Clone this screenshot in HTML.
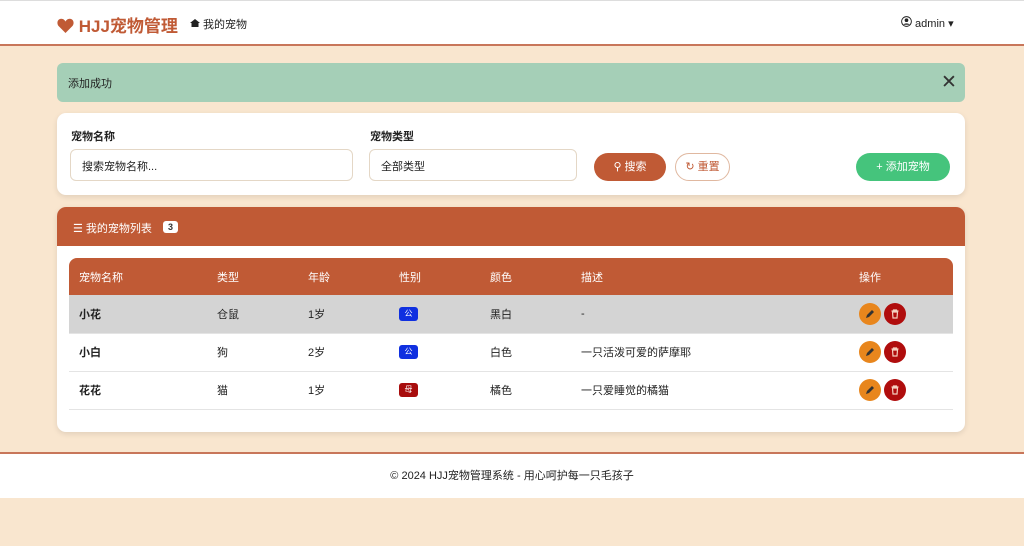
<!DOCTYPE html>
<html><head><meta charset="utf-8"><style>
*{box-sizing:border-box;margin:0;padding:0}
body{width:1024px;height:546px;background:#f9e6cf;font-family:"Liberation Sans","Noto Sans CJK SC",sans-serif;font-size:11px;color:#222;position:relative;overflow:hidden}
.nav{position:absolute;left:0;top:0;width:1024px;height:46px;background:#fff;border-top:1px solid #ddd;border-bottom:2px solid #c8765a}
.brand{position:absolute;left:57px;top:11px;font-size:17px;font-weight:bold;color:#c05a35}
.navlink{position:absolute;left:190px;top:15px;font-size:11px}
.user{position:absolute;left:901px;top:15px;font-size:11px}
.alert{position:absolute;left:57px;top:63px;width:908px;height:39px;background:#a5cfb7;border-radius:6px}
.alert span{position:absolute;left:11px;top:12px}
.alert .x{left:884px;top:8px;font-size:19px;color:#333}
.card{position:absolute;left:57px;width:908px;background:#fff;border-radius:9px;box-shadow:0 2px 6px rgba(0,0,0,.1)}
.lbl{position:absolute;top:15px;font-weight:bold;font-size:11px}
.inp{position:absolute;top:36px;height:32px;border:1px solid #e4d7c6;border-radius:6px;padding:8px 11px;font-size:11px}
.btn{position:absolute;top:40px;height:28px;border-radius:14px;font-size:11px;text-align:center;line-height:28px}
.lh{position:absolute;left:0;top:0;width:908px;height:39px;background:#c05a35;border-radius:9px 9px 0 0;color:#fff}
table{position:absolute;left:12px;top:51px;width:884px;border-collapse:collapse}
th{background:#c05a35;color:#fff;height:37px;text-align:left;font-weight:normal;padding-left:10px}
th:first-child{border-radius:8px 0 0 0}th:last-child{border-radius:0 8px 0 0}
td{height:38px;padding-left:10px;border-bottom:1px solid #e4e4e4}
.g{display:inline-block;width:19px;height:14px;border-radius:3px;color:#fff;font-size:8px;text-align:center;line-height:14px}
.c{display:inline-block;width:22px;height:22px;border-radius:50%;vertical-align:middle;margin-right:3px;position:relative}
.c svg{position:absolute;left:5px;top:5px}
.footer{position:absolute;left:0;top:452px;width:1024px;height:46px;background:#fff;border-top:2px solid #c8765a;text-align:center;line-height:44px;font-size:11px}
</style></head><body>
<div class="nav"><div class="brand"><svg width="17" height="15" viewBox="0 0 24 21" style="vertical-align:-1px"><path d="M12 21L2 11C-1 7 1 1 6 1c3 0 5 2 6 4 1-2 3-4 6-4 5 0 7 6 4 10z" fill="#c05a35"/></svg> HJJ宠物管理</div><div class="navlink"><svg width="10" height="10" viewBox="0 0 10 10"><path d="M5 1L0 5h1.5v4h7V5H10z" fill="#222"/></svg> 我的宠物</div><div class="user"><svg width="11" height="11" viewBox="0 0 12 12"><circle cx="6" cy="6" r="5.3" fill="none" stroke="#222"/><circle cx="6" cy="4.6" r="2" fill="#222"/><path d="M2.5 9.5c1-2 6-2 7 0" fill="#222"/></svg> admin ▾</div></div>
<div class="alert"><span>添加成功</span><span class="x">✕</span></div>
<div class="card" style="top:113px;height:82px">
<div class="lbl" style="left:14px">宠物名称</div><div class="inp" style="left:13px;width:283px">搜索宠物名称...</div>
<div class="lbl" style="left:313px">宠物类型</div><div class="inp" style="left:312px;width:208px">全部类型</div>
<div class="btn" style="left:537px;width:72px;background:#c05a35;color:#fff">⚲ 搜索</div>
<div class="btn" style="left:618px;width:55px;border:1px solid #e0b8a0;color:#c05a35;line-height:26px">↻ 重置</div>
<div class="btn" style="left:799px;width:94px;background:#45c47c;color:#fff">+ 添加宠物</div>
</div>
<div class="card" style="top:207px;height:225px">
<div class="lh"><span style="position:absolute;left:16px;top:13px">☰ 我的宠物列表</span><span style="position:absolute;left:106px;top:14px;background:#fff;color:#333;border-radius:3px;font-size:9px;font-weight:bold;padding:1px 5px">3</span></div>
<table>
<tr><th style="width:138px">宠物名称</th><th style="width:91px">类型</th><th style="width:91px">年龄</th><th style="width:91px">性别</th><th style="width:91px">颜色</th><th style="width:278px">描述</th><th>操作</th></tr>
<tr style="background:#d4d4d4"><td><b>小花</b></td><td>仓鼠</td><td>1岁</td><td><span class="g" style="background:#1030e0">公</span></td><td>黑白</td><td>-</td><td><span class="c" style="background:#e8861d"><svg width="12" height="12" viewBox="0 0 12 12"><path d="M2 10l1-3 5-5 2 2-5 5z" fill="#333"/></svg></span><span class="c" style="background:#b00d0d"><svg width="12" height="12" viewBox="0 0 12 12"><path d="M2.5 3h7M4.5 3V2h3v1M3.5 4h5l-.5 6h-4z" fill="none" stroke="#f4d0c0" stroke-width="1.2"/></svg></span></td></tr>
<tr><td><b>小白</b></td><td>狗</td><td>2岁</td><td><span class="g" style="background:#1030e0">公</span></td><td>白色</td><td>一只活泼可爱的萨摩耶</td><td><span class="c" style="background:#e8861d"><svg width="12" height="12" viewBox="0 0 12 12"><path d="M2 10l1-3 5-5 2 2-5 5z" fill="#333"/></svg></span><span class="c" style="background:#b00d0d"><svg width="12" height="12" viewBox="0 0 12 12"><path d="M2.5 3h7M4.5 3V2h3v1M3.5 4h5l-.5 6h-4z" fill="none" stroke="#f4d0c0" stroke-width="1.2"/></svg></span></td></tr>
<tr><td><b>花花</b></td><td>猫</td><td>1岁</td><td><span class="g" style="background:#a80d0d">母</span></td><td>橘色</td><td>一只爱睡觉的橘猫</td><td><span class="c" style="background:#e8861d"><svg width="12" height="12" viewBox="0 0 12 12"><path d="M2 10l1-3 5-5 2 2-5 5z" fill="#333"/></svg></span><span class="c" style="background:#b00d0d"><svg width="12" height="12" viewBox="0 0 12 12"><path d="M2.5 3h7M4.5 3V2h3v1M3.5 4h5l-.5 6h-4z" fill="none" stroke="#f4d0c0" stroke-width="1.2"/></svg></span></td></tr>
</table>
</div>
<div class="footer">© 2024 HJJ宠物管理系统 - 用心呵护每一只毛孩子</div>
</body></html>
